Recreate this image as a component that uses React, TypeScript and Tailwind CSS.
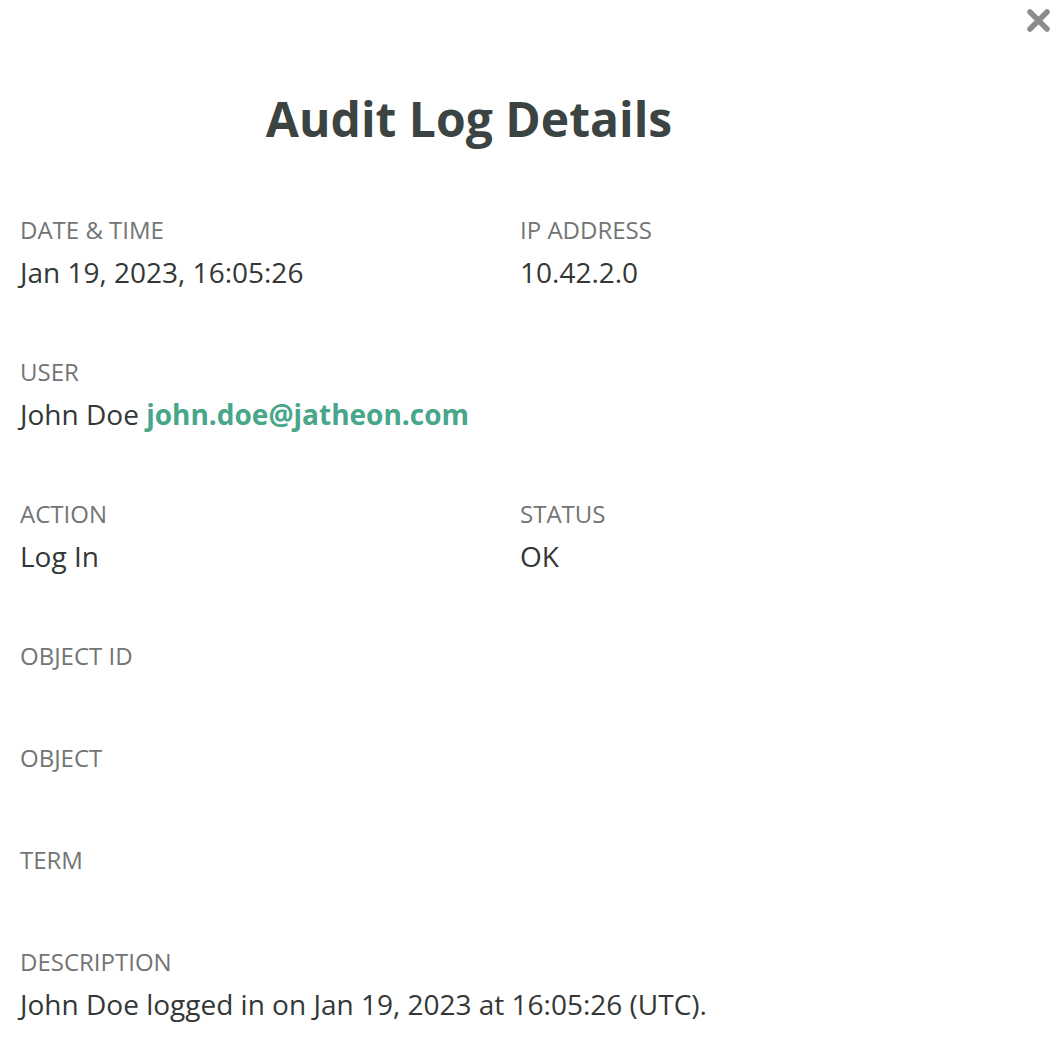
import React from 'react';

type Field = {
  label: string;
  value?: React.ReactNode;
};

const rows: Field[][] = [
  [
    { label: 'Date & Time', value: 'Jan 19, 2023, 16:05:26' },
    { label: 'IP Address', value: '10.42.2.0' },
  ],
  [
    {
      label: 'User',
      value: (
        <>
          John Doe <span className="font-bold text-[#48a68a]">john.doe@jatheon.com</span>
        </>
      ),
    },
  ],
  [
    { label: 'Action', value: 'Log In' },
    { label: 'Status', value: 'OK' },
  ],
  [{ label: 'Object ID' }],
  [{ label: 'Object' }],
  [{ label: 'Term' }],
  [{ label: 'Description', value: 'John Doe logged in on Jan 19, 2023 at 16:05:26 (UTC).' }],
];

const DetailField = ({ label, value }: Field) => (
  <div>
    <div className="text-[24px] leading-[30px] uppercase text-[#727575]">{label}</div>
    {value && <div className="mt-[15px] text-[28px] leading-[25px] text-[#333837] whitespace-nowrap">{value}</div>}
  </div>
);

export default function App() {
  return (
    <div className="relative min-h-[1040px] w-full bg-white px-5 font-['Open_Sans',sans-serif]">
      <button className="absolute left-[1026px] top-[8px]">
        <svg width="25" height="25" viewBox="0 0 25 25">
          <path d="M4 4L21 21M21 4L4 21" stroke="#8c8c8c" strokeWidth="5.5" strokeLinecap="round" />
        </svg>
      </button>

      <div className="w-[898px] pt-[89px] text-center">
        <h1 className="text-[48px] font-bold leading-[60px] text-[#3b4442]">Audit Log Details</h1>
      </div>

      <div className="mt-[66px] flex flex-col gap-[72px]">
        {rows.map((row, i) => (
          <div key={i} className="grid grid-cols-[500px_500px]">
            {row.map((f) => (
              <DetailField key={f.label} {...f} />
            ))}
          </div>
        ))}
      </div>
    </div>
  );
}
